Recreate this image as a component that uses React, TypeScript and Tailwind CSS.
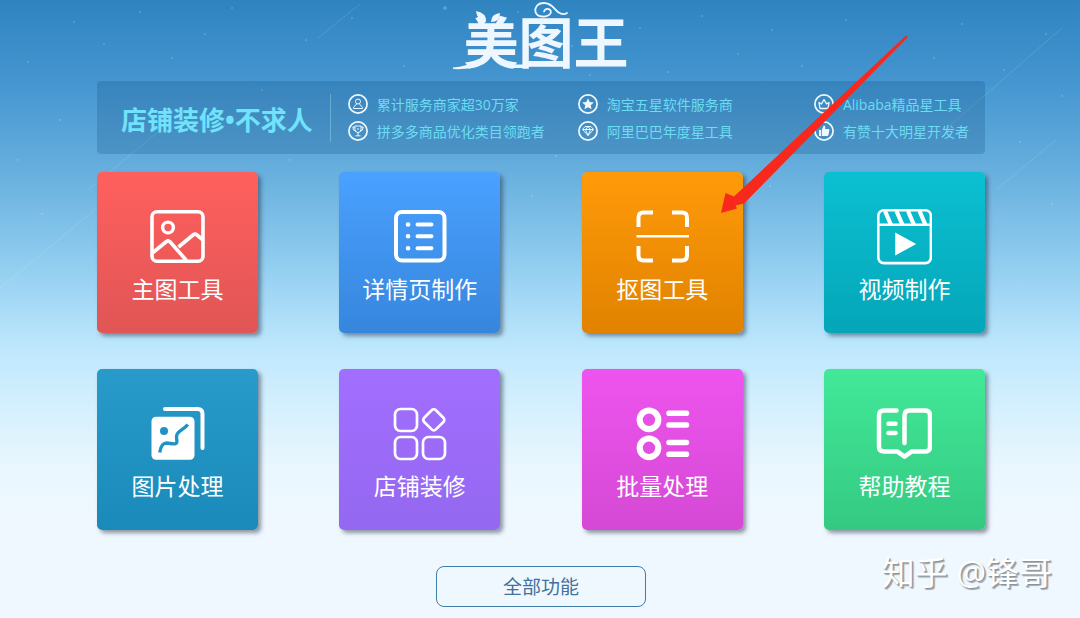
import React from 'react';

const tools = [
  {
    name: '主图工具',
    color: 'from-[#ff605e] to-[#e05555]',
    icon: (
      <>
        <rect x="2" y="2.8" width="51" height="49.5" rx="5" strokeWidth="3.6" />
        <circle cx="18" cy="18.5" r="5.4" strokeWidth="3.4" />
        <path d="M3 43.5 16.5 32.5q1.8-1.5 3.5.2L36.500 51.5M28.5 38 43 26q2-1.6 4 0l6 5" strokeWidth="3.6" />
      </>
    ),
  },
  {
    name: '详情页制作',
    color: 'from-[#4aa1ff] to-[#3686dd]',
    icon: (
      <>
        <rect x="4" y="3" width="48.5" height="48.5" rx="6" strokeWidth="4" />
        <path d="M25.5 15.5h14M25.5 27.3h14M25.5 39.3h14" strokeWidth="4" strokeLinecap="round" />
        <path d="M16 15.5h.1M16 27.3h.1M16 39.3h.1" strokeWidth="4.6" strokeLinecap="round" />
      </>
    ),
  },
  {
    name: '抠图工具',
    color: 'from-[#ff9a0a] to-[#e18300]',
    marked: true,
    icon: (
      <>
        <path d="M4.5 18V8.5q0-5 5-5h9.500M38 3.500h10q5 0 5 5V18M4.500 37v9.500q0 5 5 5H19M38 51.500h10q5 0 5-5V37" strokeWidth="4" />
        <path d="M2.5 27.3H55" strokeWidth="2.6" />
      </>
    ),
  },
  {
    name: '视频制作',
    color: 'from-[#0bc0d2] to-[#04a6b8]',
    icon: (
      <>
        <rect x="2.3" y="1.3" width="52.6" height="52.8" rx="5.5" strokeWidth="2.6" />
        <path d="M2.5 15.8h52" strokeWidth="2.6" />
        <path d="m9 2 6 14M20.500 2l6 14M32 2l6 14M43.500 2l6 14" strokeWidth="4.2" />
        <path d="M19.2 23.5v23l21-11.5z" fill="currentColor" stroke="none" />
      </>
    ),
  },
  {
    name: '图片处理',
    color: 'from-[#289bca] to-[#198aba]',
    icon: (
      <>
        <rect x="1.5" y="10.7" width="43" height="43" rx="4.5" fill="currentColor" stroke="none" />
        <path d="M15 3h32.500q5 0 5 5v34" strokeWidth="4" strokeLinecap="round" strokeLinejoin="round" />
        <circle cx="14" cy="25" r="4" fill="#2193c3" stroke="none" />
        <path d="M9.7 46.500c1.2-7 3-9.500 7-9.500 5 .3 10 2.500 10.200-1.500.1-3-1.300-4.500.3-7.500 2.300-4 7.300-5 10.600-9.500" stroke="#2193c3" strokeWidth="3.4" />
      </>
    ),
  },
  {
    name: '店铺装修',
    color: 'from-[#a26eff] to-[#9468f0]',
    icon: (
      <g strokeWidth="2.7">
        <rect x="3" y="3" width="22" height="22" rx="5.5" />
        <rect x="3" y="31" width="22" height="22" rx="5.5" />
        <rect x="31" y="31" width="22" height="22" rx="5.5" />
        <rect x="33.5" y="5.5" width="16.6" height="16.6" rx="3" transform="rotate(45 41.8 13.8)" />
      </g>
    ),
  },
  {
    name: '批量处理',
    color: 'from-[#ee54ee] to-[#d549d5]',
    icon: (
      <>
        <circle cx="15" cy="13.8" r="9.3" strokeWidth="6.2" />
        <circle cx="15" cy="41.8" r="9.3" strokeWidth="6.2" />
        <path d="M35 7.200h17.500M35 19h17.500M35 36.500h17.500M35 48.300h17.500" strokeWidth="5.6" strokeLinecap="round" />
      </>
    ),
  },
  {
    name: '帮助教程',
    color: 'from-[#42e998] to-[#34c982]',
    icon: (
      <g strokeWidth="4.5" strokeLinecap="round" strokeLinejoin="round">
        <path d="M20.500 4.600H8q-5 0-5 5v31q0 5 5 5h13.500l7 5 7-5H49q5 0 5-5v-31q0-5-5-5H33.500q-5 0-5 5v27.500" />
        <path d="M12.500 17.700h7M12.500 27h7" />
      </g>
    ),
  },
];

const features = [
  {
    text: '累计服务商家超30万家',
    icon: <path d="M10 5a2.5 2.5 0 1 0 0 5 2.5 2.5 0 0 0 0-5ZM8.5 10 5.5 13.500v1h9v-1l-3-3.500" strokeWidth="1" />,
  },
  {
    text: '淘宝五星软件服务商',
    icon: <path d="m10 4.3 1.7 3.8 4.1.4-3.1 2.7.9 4.1-3.6-2.1-3.6 2.1.9-4.1-3.1-2.7 4.1-.4z" fill="currentColor" stroke="none" />,
  },
  {
    text: 'Alibaba精品星工具',
    icon: <path d="M5 8.5 7.5 10 10 5.5l2.5 4.5L15 8.5l-1 6H6z" strokeWidth="1.3" strokeLinejoin="round" />,
  },
  {
    text: '拼多多商品优化类目领跑者',
    icon: <path d="M7 5h6v3.5a3 3 0 0 1-6 0zM7 6H4.800q0 4 3 4M13 6h2.200q0 4-3 4M10 11.500v3M7.500 14.800h5M9 8h2" strokeWidth="1" />,
  },
  {
    text: '阿里巴巴年度星工具',
    icon: <path d="M7 5.5h6l2.5 3L10 14.500l-5.500-6zM4.500 8.500h11M7.500 8.500l2.500 6 2.500-6L10 5.500z" strokeWidth="1" strokeLinejoin="round" />,
  },
  {
    text: '有赞十大明星开发者',
    icon: <path d="M5 9h2v6H5zM7.8 9l2-4.500c1.600 0 1.800 1.200 1.200 3.500h3.500q1 0 .8 1.200l-.8 4.600q-.3 1.200-1.500 1.200H7.800z" fill="currentColor" stroke="none" />,
  },
];

// x, y, radius
const stars = [
  [28, 62, 1], [74, 22, 1], [104, 44, 1], [140, 12, 1], [172, 58, 1], [205, 34, 1], [232, 8, 1], [262, 90, 1],
  [306, 40, 1], [352, 18, 1], [404, 66, 1], [445, 8, 2], [518, 12, 1], [556, 156, 1], [572, 46, 1], [590, 75, 1],
  [640, 28, 1], [668, 72, 1], [702, 16, 1], [738, 54, 1], [772, 30, 1], [802, 66, 1], [846, 20, 1], [934, 58, 1],
  [962, 24, 1], [1004, 70, 1], [1046, 34, 1], [1062, 96, 1], [1020, 142, 1], [60, 120, 1], [18, 160, 1],
  [290, 160, 1], [42, 214, 1], [770, 186, 1], [532, 196, 1], [1052, 204, 1],
];

function Sky() {
  return (
    <svg className="pointer-events-none absolute top-0 left-0 h-[320px] w-full text-white" viewBox="0 0 1080 320" preserveAspectRatio="xMidYMin slice" aria-hidden="true">
      {stars.map(([x, y, r]) => (
        <circle key={`${x}-${y}`} cx={x} cy={y} r={r} fill="currentColor" opacity="0.2" />
      ))}
      <g stroke="currentColor" opacity="0.13">
        <path d="M88 190 158 132M0 288l97-80M938 136l124-108M318 38l42-34M996 190l60-50" />
      </g>
    </svg>
  );
}

function Logo() {
  return (
    <h1 className="relative h-[81px] pt-2.5 pl-2.5 text-[55px] leading-[64px] font-bold text-[#eef7ff]">
      美图王
      <svg className="absolute top-0 left-0 h-[81px] w-[175px]" viewBox="0 0 175 81" fill="none" stroke="currentColor" aria-hidden="true">
        <path d="M114 13q-4 2.500-9-1c-4-3-6-9-14-9-7 0-9.500 5-8.500 9 1.500 5.500 11.500 6 15 1.500 2-4.500-4.500-6.500-6.500-2" strokeWidth="1.8" strokeLinecap="round" />
        <path d="M23 11q11 2 10 11-9-1-10-11ZM47 13q0 9-9 9 0-8 9-9Z" fill="currentColor" stroke="none" />
        <path d="M0 67.500q14-1 24-7l5 4Q18 70 0 69ZM53 61q5 3.500 10 3.500h12v3.500H62Q54 68 48 65Z" fill="currentColor" stroke="none" />
      </svg>
    </h1>
  );
}

function Pointer() {
  return (
    <svg className="pointer-events-none absolute -top-[138px] left-[138px] z-20 h-[182px] w-[192px]" viewBox="0 0 192 182" fill="#f8281c" aria-hidden="true">
      <path d="M186 1.500 14 162.500 5.500 159 1 179 17 174.500 15.500 171.500 24 169.500 188 3Z" />
    </svg>
  );
}

export default function App() {
  return (
    <div className="relative min-h-screen overflow-hidden bg-[linear-gradient(to_bottom,#2f84c0_0px,#4495d0_80px,#64addd_165px,#8fccef_260px,#bce7fd_345px,#d2effd_400px,#eaf7fe_470px,#f0f8ff_530px)] font-['Open_Sans','Noto_Sans_CJK_SC',sans-serif]">
      <Sky />

      <main className="relative mx-auto flex w-full max-w-[890px] flex-col items-center pb-3 pl-0.5">
        <Logo />

        <section className="flex h-[73px] w-full items-center rounded bg-[#003c6e]/20 pl-6 text-[#70e2fb]">
          <h2 className="shrink-0 pt-1 text-[26px] leading-8 font-bold whitespace-nowrap">店铺装修•不求人</h2>
          <div className="ml-[17px] h-12 w-px shrink-0 bg-[#8fcdea]/50" />
          <ul className="ml-[17px] grid flex-1 grid-cols-[230fr_236fr_171fr] text-sm leading-[27px] whitespace-nowrap text-[#6bdcf3]">
            {features.map((feature) => (
              <li key={feature.text} className="flex items-center gap-[9px]">
                <svg className="size-5 shrink-0 text-[#eefaff]" viewBox="0 0 20 20" fill="none" stroke="currentColor" aria-hidden="true">
                  <circle cx="10" cy="10" r="9.1" strokeWidth="1.7" />
                  {feature.icon}
                </svg>
                <span>{feature.text}</span>
              </li>
            ))}
          </ul>
        </section>

        <div className="mt-[18px] grid w-full grid-cols-[repeat(4,161px)] justify-between gap-y-9">
          {tools.map((tool) => (
            <div key={tool.name} className="relative">
              <button
                type="button"
                className={`flex h-[161px] w-full flex-col items-center gap-2 rounded-[5px] bg-gradient-to-b pt-[37px] text-white shadow-[3px_3px_4px_rgba(40,50,70,0.5)] ${tool.color}`}
              >
                <svg className="size-14" viewBox="0 0 56 56" fill="none" stroke="currentColor" aria-hidden="true">
                  {tool.icon}
                </svg>
                <span className="text-[23px] leading-8">{tool.name}</span>
              </button>
              {tool.marked && <Pointer />}
            </div>
          ))}
        </div>

        <button type="button" className="mt-9 h-[41px] w-[210px] rounded-lg border border-[#3f7ca8] text-[19px] leading-6 text-[#40719d]">
          全部功能
        </button>
      </main>

      <p className="absolute right-7 bottom-6 text-[33px] leading-[44px] text-white [text-shadow:1px_1px_1px_#8a9299,2px_2px_1px_#a4acb4]">知乎 @锋哥</p>
    </div>
  );
}
